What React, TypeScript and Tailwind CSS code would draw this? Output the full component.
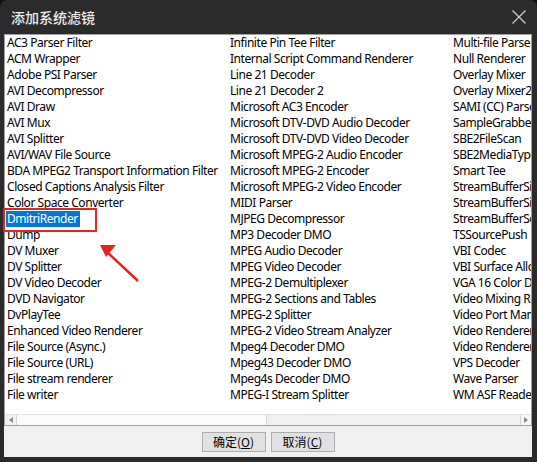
import React from "react";

const col1 = [
  "AC3 Parser Filter",
  "ACM Wrapper",
  "Adobe PSI Parser",
  "AVI Decompressor",
  "AVI Draw",
  "AVI Mux",
  "AVI Splitter",
  "AVI/WAV File Source",
  "BDA MPEG2 Transport Information Filter",
  "Closed Captions Analysis Filter",
  "Color Space Converter",
  "DmitriRender",
  "Dump",
  "DV Muxer",
  "DV Splitter",
  "DV Video Decoder",
  "DVD Navigator",
  "DvPlayTee",
  "Enhanced Video Renderer",
  "File Source (Async.)",
  "File Source (URL)",
  "File stream renderer",
  "File writer",
];

const col2 = [
  "Infinite Pin Tee Filter",
  "Internal Script Command Renderer",
  "Line 21 Decoder",
  "Line 21 Decoder 2",
  "Microsoft AC3 Encoder",
  "Microsoft DTV-DVD Audio Decoder",
  "Microsoft DTV-DVD Video Decoder",
  "Microsoft MPEG-2 Audio Encoder",
  "Microsoft MPEG-2 Encoder",
  "Microsoft MPEG-2 Video Encoder",
  "MIDI Parser",
  "MJPEG Decompressor",
  "MP3 Decoder DMO",
  "MPEG Audio Decoder",
  "MPEG Video Decoder",
  "MPEG-2 Demultiplexer",
  "MPEG-2 Sections and Tables",
  "MPEG-2 Splitter",
  "MPEG-2 Video Stream Analyzer",
  "Mpeg4 Decoder DMO",
  "Mpeg43 Decoder DMO",
  "Mpeg4s Decoder DMO",
  "MPEG-I Stream Splitter",
];

const col3 = [
  "Multi-file Parser",
  "Null Renderer",
  "Overlay Mixer",
  "Overlay Mixer2",
  "SAMI (CC) Parser",
  "SampleGrabber",
  "SBE2FileScan",
  "SBE2MediaTypeProfile",
  "Smart Tee",
  "StreamBufferSink",
  "StreamBufferSink2",
  "StreamBufferSource",
  "TSSourcePush",
  "VBI Codec",
  "VBI Surface Allocator",
  "VGA 16 Color Ditherer",
  "Video Mixing Renderer 9",
  "Video Port Manager",
  "Video Renderer",
  "Video Renderer",
  "VPS Decoder",
  "Wave Parser",
  "WM ASF Reader",
];

const filters = [...col1, ...col2, ...col3];

const uiFont = { fontFamily: '"Noto Sans", "Noto Sans CJK SC", sans-serif' };
const cjkFont = { fontFamily: '"Noto Sans CJK SC", "Noto Sans", sans-serif' };

export default function App() {
  return (
    <div className="w-[537px] h-[462px] bg-[#111111] overflow-hidden">
      <div className="relative w-full h-full flex flex-col bg-[#2b2b2b] rounded-t-[7px] overflow-hidden">
        {/* title bar */}
        <div className="h-[34px] flex items-center justify-between pl-[11px] pr-[11px] shrink-0">
          <span className="text-[14px] font-medium text-[#ececec] leading-none" style={cjkFont}>
            添加系统滤镜
          </span>
          <svg width="14" height="14" viewBox="0 0 14 14" className="text-[#cfcfcf]">
            <path d="M0.5 0.5 L13.5 13.5 M13.5 0.5 L0.5 13.5" stroke="currentColor" strokeWidth="1.2" fill="none" />
          </svg>
        </div>

        {/* client area */}
        <div className="flex-1 flex flex-col ml-[4px] mr-[5px] mb-[5px] bg-[#f0f0f0]">
          <div className="h-[392px] flex flex-col border border-[#a0a0a0] bg-white">
            <div className="flex-1 overflow-hidden">
              <div
                className="grid grid-flow-col grid-rows-[repeat(23,16px)] auto-cols-[223px] text-[12px] leading-[16px] text-black tracking-[-0.45px]"
                style={uiFont}
              >
                {filters.map((name, i) => (
                  <div key={i} className="pl-px whitespace-nowrap overflow-hidden">
                    <span
                      className={
                        name === "DmitriRender"
                          ? "px-px pr-[2px] bg-[#0078d7] text-white"
                          : "px-px"
                      }
                    >
                      {name}
                    </span>
                  </div>
                ))}
              </div>
            </div>
            {/* horizontal scrollbar */}
            <div className="h-[11px] flex border-t border-[#e2e2e2] bg-[#f0f0f0]">
              <div className="w-[11px] flex items-center justify-center">
                <svg width="4" height="6" viewBox="0 0 4 6">
                  <path d="M4 0 L0 3 L4 6 Z" fill="#8a8a8a" />
                </svg>
              </div>
              <div className="flex-1 flex">
                <div className="w-[251px] bg-[#fbfbfb] border-x border-[#d6d6d6]" />
                <div className="flex-1" />
              </div>
              <div className="w-[11px] flex items-center justify-center border-l border-[#d6d6d6] bg-[#f7f7f7]">
                <svg width="4" height="6" viewBox="0 0 4 6">
                  <path d="M0 0 L4 3 L0 6 Z" fill="#8a8a8a" />
                </svg>
              </div>
            </div>
          </div>

          {/* buttons */}
          <div className="flex-1 flex items-center justify-center gap-[5px]">
            <button
              className="w-[64px] h-[20px] bg-[#e1e1e1] border border-[#adadad] text-[12px] text-black leading-none"
              style={cjkFont}
            >
              确定(<span className="underline">O</span>)
            </button>
            <button
              className="w-[64px] h-[20px] bg-[#e1e1e1] border border-[#adadad] text-[12px] text-black leading-none"
              style={cjkFont}
            >
              取消(<span className="underline">C</span>)
            </button>
          </div>
        </div>

        {/* annotation: red box and arrow */}
        <div className="absolute left-[3px] top-[208px] w-[94px] h-[24px] border-2 border-[#e8221d] pointer-events-none" />
        <svg className="absolute left-0 top-0 pointer-events-none" width="537" height="462">
          <line x1="138" y1="281" x2="106" y2="251" stroke="#e8221d" strokeWidth="2.5" />
          <path d="M100 245 L116 245 L106 257 Z" fill="#e8221d" />
        </svg>
      </div>
    </div>
  );
}
